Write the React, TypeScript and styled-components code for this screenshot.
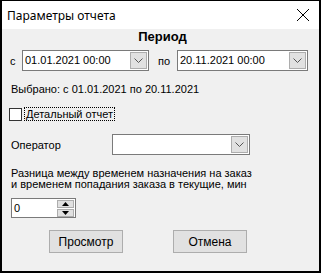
import styled, { createGlobalStyle } from "styled-components"

const GlobalStyle = createGlobalStyle`
    html, body {
        margin: 0;
        padding: 0;
        background: #000;
    }
    * {
        box-sizing: border-box;
    }
`

const Window = styled.div`
    width: 321px;
    height: 273px;
    border: 2px solid #000;
    border-top-width: 1px;
    display: flex;
    flex-direction: column;
    font-family: "Liberation Sans", Arial, sans-serif;
    font-size: 11px;
    color: #000;
`

const TitleBar = styled.div`
    height: 28px;
    background: #fff;
    display: flex;
    align-items: center;
    justify-content: space-between;
    padding: 0 6px 0 5px;
    font-family: "Noto Sans", sans-serif;
    font-size: 12px;
`

const CloseIcon = styled.svg`
    width: 14px;
    height: 14px;
    margin-right: 3px;
`

const Body = styled.div`
    flex: 1;
    background: #f0f0f0;
    padding: 0 7px;
    display: flex;
    flex-direction: column;
`

const Heading = styled.div`
    text-align: center;
    font-weight: 700;
    font-size: 13px;
    line-height: 15px;
    margin-top: 0px;
    padding-left: 4px;
`

const DateRow = styled.div`
    display: flex;
    align-items: center;
    margin-top: 6px;
    height: 21px;
`

const RowLabel = styled.span<{ $w: number; $pl?: number }>`
    width: ${p => p.$w}px;
    padding-left: ${p => p.$pl ?? 1}px;
`

const Combo = styled.div<{ $w: number }>`
    width: ${p => p.$w}px;
    height: 21px;
    background: #fff;
    border: 1px solid #7a7a7a;
    display: flex;
    align-items: center;
    justify-content: space-between;
    padding: 0 1px 0 2px;
`

const ComboText = styled.span`
    line-height: 19px;
`

const DropBtn = styled.div`
    width: 17px;
    height: 17px;
    background: #e1e1e1;
    border: 1px solid #adadad;
    display: flex;
    align-items: center;
    justify-content: center;
`

const Selected = styled.div`
    margin-top: 11px;
    padding-left: 2px;
    line-height: 14px;
`

const CheckRow = styled.label`
    display: flex;
    align-items: center;
    margin-top: 11px;
    height: 14px;
`

const CheckBox = styled.span`
    width: 13px;
    height: 13px;
    background: #fff;
    border: 1px solid #333;
    margin-right: 2px;
`

const FocusLabel = styled.span`
    border: 1px dotted #000;
    padding: 0 1px;
    line-height: 12px;
`

const OperatorRow = styled.div`
    display: flex;
    align-items: center;
    margin-top: 13px;
    height: 21px;
`

const Description = styled.div`
    margin-top: 13px;
    padding-left: 2px;
    line-height: 11px;
`

const Spinner = styled.div`
    margin-top: 8px;
    margin-left: 2px;
    width: 65px;
    height: 20px;
    background: #fff;
    border: 1px solid #7a7a7a;
    display: flex;
    align-items: center;
    justify-content: space-between;
    padding: 0 1px 0 2px;
`

const SpinBtns = styled.div`
    display: flex;
    flex-direction: column;
    gap: 1px;
`

const SpinBtn = styled.div`
    width: 17px;
    height: 8px;
    background: #e1e1e1;
    border: 1px solid #adadad;
    display: flex;
    align-items: center;
    justify-content: center;
`

const ButtonRow = styled.div`
    display: flex;
    gap: 50px;
    margin-top: 12px;
    padding-left: 40px;
`

const Button = styled.div`
    width: 74px;
    height: 23px;
    background: #e1e1e1;
    border: 1px solid #adadad;
    display: flex;
    align-items: center;
    justify-content: center;
    font-size: 12px;
`

const Chevron = () => (
    <svg width="9" height="5" viewBox="0 0 9 5">
        <path d="M0.5 0.5 L4.5 4.5 L8.5 0.5" fill="none" stroke="#555" strokeWidth="1" />
    </svg>
)

const Tri: React.FC<{ up?: boolean }> = ({ up }) => (
    <svg width="7" height="4" viewBox="0 0 7 4">
        <path d={up ? "M0 4 L3.5 0 L7 4 Z" : "M0 0 L3.5 4 L7 0 Z"} fill="#000" />
    </svg>
)

const App = () => {
    return (
        <>
            <GlobalStyle />
            <Window>
                <TitleBar>
                    <span>Параметры отчета</span>
                    <CloseIcon viewBox="0 0 14 14">
                        <path d="M1 1 L13 13 M13 1 L1 13" stroke="#000" strokeWidth="1" />
                    </CloseIcon>
                </TitleBar>
                <Body>
                    <Heading>Период</Heading>
                    <DateRow>
                        <RowLabel $w={13}>с</RowLabel>
                        <Combo $w={127}>
                            <ComboText>01.01.2021 00:00</ComboText>
                            <DropBtn><Chevron /></DropBtn>
                        </Combo>
                        <RowLabel $w={28} $pl={9}>по</RowLabel>
                        <Combo $w={131}>
                            <ComboText>20.11.2021 00:00</ComboText>
                            <DropBtn><Chevron /></DropBtn>
                        </Combo>
                    </DateRow>
                    <Selected>Выбрано: с 01.01.2021 по 20.11.2021</Selected>
                    <CheckRow>
                        <CheckBox />
                        <FocusLabel>Детальный отчет</FocusLabel>
                    </CheckRow>
                    <OperatorRow>
                        <RowLabel $w={103} $pl={2}>Оператор</RowLabel>
                        <Combo $w={138}>
                            <ComboText />
                            <DropBtn><Chevron /></DropBtn>
                        </Combo>
                    </OperatorRow>
                    <Description>
                        Разница между временем назначения на заказ<br />
                        и временем попадания заказа в текущие, мин
                    </Description>
                    <Spinner>
                        <span>0</span>
                        <SpinBtns>
                            <SpinBtn><Tri up /></SpinBtn>
                            <SpinBtn><Tri /></SpinBtn>
                        </SpinBtns>
                    </Spinner>
                    <ButtonRow>
                        <Button>Просмотр</Button>
                        <Button>Отмена</Button>
                    </ButtonRow>
                </Body>
            </Window>
        </>
    )
}

export default App
